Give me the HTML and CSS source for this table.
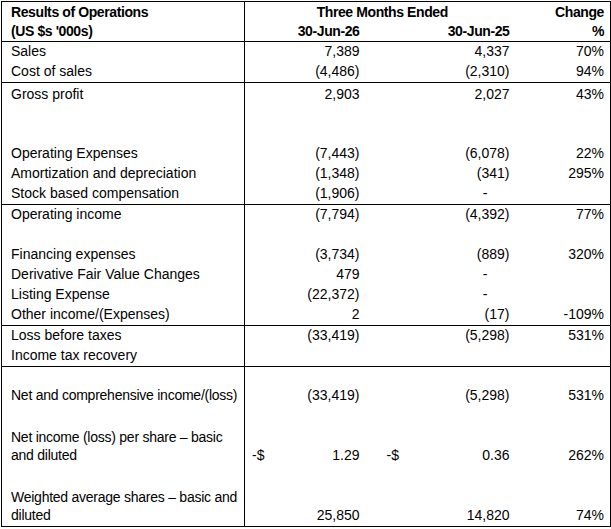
FILE: index.html
```html
<!DOCTYPE html>
<html lang="en">
<head>
<meta charset="utf-8">
<title>Results of Operations</title>
<link rel="stylesheet" href="styles.css">
</head>
<body>
<table class="ops">
  <colgroup>
    <col class="c-label">
    <col class="c-cur">
    <col class="c-prior">
    <col class="c-chg">
  </colgroup>
  <thead>
    <tr class="h20">
      <th class="label">Results of Operations</th>
      <th class="span-center" colspan="2">Three Months Ended</th>
      <th class="chg">Change</th>
    </tr>
    <tr class="h20">
      <th class="label">(US $s '000s)</th>
      <th class="cur">30-Jun-26</th>
      <th class="prior">30-Jun-25</th>
      <th class="chg">%</th>
    </tr>
  </thead>
  <tbody>
    <tr class="h20 rule">
      <td class="label">Sales</td><td class="cur">7,389</td><td class="prior">4,337</td><td class="chg">70%</td>
    </tr>
    <tr class="h20">
      <td class="label">Cost of sales</td><td class="cur">(4,486)</td><td class="prior">(2,310)</td><td class="chg">94%</td>
    </tr>
    <tr class="h22 rule">
      <td class="label">Gross profit</td><td class="cur">2,903</td><td class="prior">2,027</td><td class="chg">43%</td>
    </tr>
    <tr class="h39"><td class="label"></td><td></td><td></td><td></td></tr>
    <tr class="h20">
      <td class="label">Operating Expenses</td><td class="cur">(7,443)</td><td class="prior">(6,078)</td><td class="chg">22%</td>
    </tr>
    <tr class="h20">
      <td class="label">Amortization and depreciation</td><td class="cur">(1,348)</td><td class="prior">(341)</td><td class="chg">295%</td>
    </tr>
    <tr class="h20">
      <td class="label">Stock based compensation</td><td class="cur">(1,906)</td><td class="prior dash">-</td><td class="chg"></td>
    </tr>
    <tr class="h20 rule">
      <td class="label">Operating income</td><td class="cur">(7,794)</td><td class="prior">(4,392)</td><td class="chg">77%</td>
    </tr>
    <tr class="h20"><td class="label"></td><td></td><td></td><td></td></tr>
    <tr class="h20">
      <td class="label">Financing expenses</td><td class="cur">(3,734)</td><td class="prior">(889)</td><td class="chg">320%</td>
    </tr>
    <tr class="h20">
      <td class="label">Derivative Fair Value Changes</td><td class="cur">479</td><td class="prior dash">-</td><td class="chg"></td>
    </tr>
    <tr class="h20">
      <td class="label">Listing Expense</td><td class="cur">(22,372)</td><td class="prior dash">-</td><td class="chg"></td>
    </tr>
    <tr class="h20">
      <td class="label">Other income/(Expenses)</td><td class="cur">2</td><td class="prior">(17)</td><td class="chg">-109%</td>
    </tr>
    <tr class="h20 rule">
      <td class="label">Loss before taxes</td><td class="cur">(33,419)</td><td class="prior">(5,298)</td><td class="chg">531%</td>
    </tr>
    <tr class="h20">
      <td class="label">Income tax recovery</td><td class="cur"></td><td class="prior"></td><td class="chg"></td>
    </tr>
    <tr class="h20 rule"><td class="label"></td><td></td><td></td><td></td></tr>
    <tr class="h20">
      <td class="label tight">Net and comprehensive income/(loss)</td><td class="cur">(33,419)</td><td class="prior">(5,298)</td><td class="chg">531%</td>
    </tr>
    <tr class="h20"><td class="label"></td><td></td><td></td><td></td></tr>
    <tr class="h40">
      <td class="label tight">Net income (loss) per share &ndash; basic<br>and diluted</td>
      <td class="cur"><div class="acct"><span>-$</span><span>1.29</span></div></td>
      <td class="prior"><div class="acct"><span>-$</span><span>0.36</span></div></td>
      <td class="chg">262%</td>
    </tr>
    <tr class="h20"><td class="label"></td><td></td><td></td><td></td></tr>
    <tr class="h40">
      <td class="label tight">Weighted average shares &ndash; basic and<br>diluted</td>
      <td class="cur">25,850</td><td class="prior">14,820</td><td class="chg">74%</td>
    </tr>
  </tbody>
</table>
</body>
</html>
```

FILE: styles.css
```css
html, body {
  margin: 0;
  padding: 0;
  background: #ffffff;
}

body {
  padding: 1px 0 0 1px;
  font-family: "Liberation Sans", Arial, sans-serif;
  font-size: 14px;
  color: #000000;
}

.ops {
  border-collapse: collapse;
  table-layout: fixed;
  width: 609px;
  border: 1px solid #000000;
}

.c-label { width: 243px; }
.c-cur { width: 131px; }
.c-prior { width: 150px; }
.c-chg { width: 85px; }

.ops th,
.ops td {
  padding: 0 0 2px 0;
  line-height: 18px;
  vertical-align: bottom;
  white-space: nowrap;
  font-weight: normal;
}

.ops th {
  font-weight: bold;
  letter-spacing: -0.4px;
  padding-bottom: 1px;
}

.ops .label {
  text-align: left;
  padding-left: 9px;
  padding-right: 0;
  border-right: 1px solid #000000;
}

.ops .tight {
  letter-spacing: -0.25px;
}

.ops .cur {
  text-align: right;
  padding-left: 7px;
  padding-right: 16px;
}

.ops .prior {
  text-align: right;
  padding-left: 11px;
  padding-right: 16px;
}

.ops .dash {
  padding-right: 38px;
}

.ops .chg {
  text-align: right;
  padding-right: 6px;
}

.ops .span-center {
  text-align: center;
  padding-right: 6px;
}

.ops .rule > td,
.ops .rule > th {
  border-top: 1px solid #000000;
}

.h20 { height: 20px; }
.h22 { height: 22px; }
.h39 { height: 39px; }
.h40 { height: 40px; }

.acct {
  display: flex;
  justify-content: space-between;
}
```
